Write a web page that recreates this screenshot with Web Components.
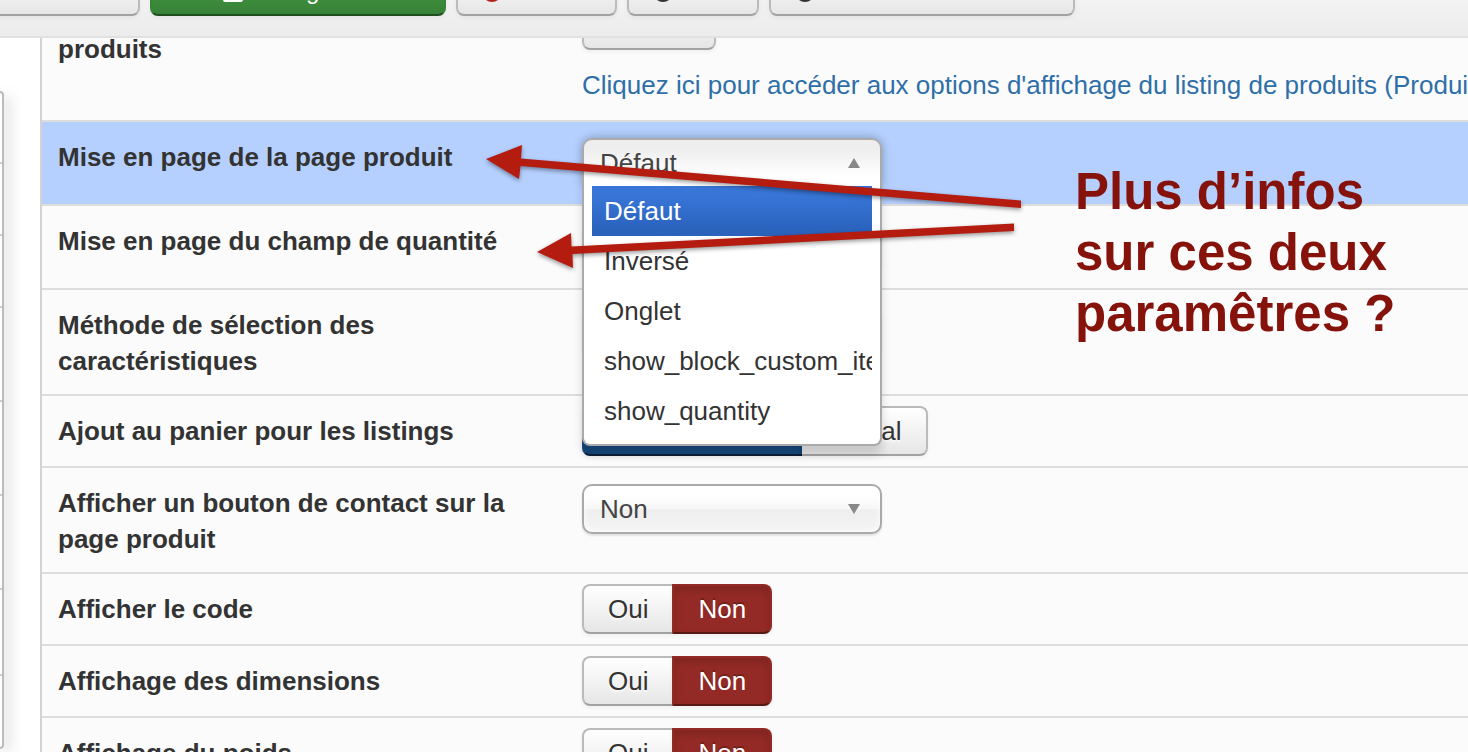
<!DOCTYPE html>
<html lang="fr">
<head>
  <meta charset="utf-8">
  <title>Configuration</title>
  <style>
    body {
      margin: 0;
      height: 100vh;
      overflow: hidden;
      background: #fff;
      color: #333;
      font: 26px/36px "Liberation Sans", Arial, sans-serif;
    }
  </style>
</head>
<body>
  <config-page></config-page>

  <script>
    class ConfigPage extends HTMLElement {
      constructor() {
        super();
        this.attachShadow({ mode: 'open' });
        this.shadowRoot.innerHTML = /*html*/ `
          <style>
            :host {
              display: flex;
              flex-direction: column;
              height: 100%;
              overflow: hidden;
            }

            .content {
              display: flex;
              flex: 1;
              min-height: 0;
              /* le contenu défile sous la barre d'outils */
              margin-top: -38px;
            }

            main {
              position: relative;
              flex: 1;
              min-width: 0;
              border-left: 2px solid #d3d3d3;
              background: #fbfbfb;
            }

            .more {
              display: flex;
              flex-direction: column;
              align-items: flex-start;
              gap: 17px;
            }

            .more a {
              color: #2f6fa8;
              text-decoration: none;
              white-space: nowrap;
            }
          </style>

          <tool-bar>
            <tool-button icon="save">Enregistrer &amp; Fermer</tool-button>
            <tool-button icon="save" class="primary">Enregistrer</tool-button>
            <tool-button icon="close">Fermer</tool-button>
            <tool-button icon="help">Aide</tool-button>
            <tool-button icon="help">Panneau de contrôle</tool-button>
          </tool-bar>

          <div class="content">
            <side-menu></side-menu>
            <main>
              <form-row class="first">
                <span slot="label">produits</span>
                <div class="more">
                  <plain-button></plain-button>
                  <a href="#listing">Cliquez ici pour accéder aux options d'affichage du listing de produits (Produits)</a>
                </div>
              </form-row>
              <form-row class="active">
                <label slot="label" for="layout">Mise en page de la page produit</label>
                <select-box id="layout" name="Mise en page de la page produit" open
                  options='["Défaut","Inversé","Onglet","show_block_custom_item","show_quantity"]'></select-box>
              </form-row>
              <form-row>
                <label slot="label" for="quantity">Mise en page du champ de quantité</label>
                <select-box id="quantity" name="Mise en page du champ de quantité" options="[]"></select-box>
              </form-row>
              <form-row>
                <label slot="label" for="method">Méthode de sélection des caractéristiques</label>
                <select-box id="method" name="Méthode de sélection des caractéristiques" options="[]"></select-box>
              </form-row>
              <form-row class="compact">
                <label slot="label" for="cart">Ajout au panier pour les listings</label>
                <toggle-group id="cart" name="Ajout au panier pour les listings" options='["","Global"]' value="" class="wide"></toggle-group>
              </form-row>
              <form-row>
                <label slot="label" for="contact">Afficher un bouton de contact sur la page produit</label>
                <select-box id="contact" name="Afficher un bouton de contact sur la page produit" options='["Non"]'></select-box>
              </form-row>
              <form-row class="compact">
                <label slot="label" for="code">Afficher le code</label>
                <toggle-group id="code" name="Afficher le code" options='["Oui","Non"]' value="Non"></toggle-group>
              </form-row>
              <form-row class="compact">
                <label slot="label" for="dimensions">Affichage des dimensions</label>
                <toggle-group id="dimensions" name="Affichage des dimensions" options='["Oui","Non"]' value="Non"></toggle-group>
              </form-row>
              <form-row class="compact">
                <label slot="label" for="weight">Affichage du poids</label>
                <toggle-group id="weight" name="Affichage du poids" options='["Oui","Non"]' value="Non"></toggle-group>
              </form-row>
              <page-note>Plus d’infos<br>sur ces deux<br>paramêtres ?</page-note>
            </main>
          </div>
        `;
      }
    }

    class ToolBar extends HTMLElement {
      constructor() {
        super();
        this.attachShadow({ mode: 'open' });
        this.shadowRoot.innerHTML = /*html*/ `
          <style>
            :host {
              position: relative;
              z-index: 1;
              display: flex;
              align-items: flex-end;
              gap: 10px;
              flex: none;
              box-sizing: border-box;
              height: 38px;
              padding-bottom: 20px;
              border-bottom: 2px solid #e1e1e1;
              background: linear-gradient(#f2f2f2, #ececec);
              overflow: hidden;
            }

            ::slotted(:first-child) {
              margin-left: -168px;
            }
          </style>
          <slot></slot>
        `;
      }
    }

    class ToolButton extends HTMLElement {
      constructor() {
        super();
        this.attachShadow({ mode: 'open' });
      }

      connectedCallback() {
        const icons = {
          save: '<path d="M0 2h15l3 3v11q0 2-2 2H2q-2 0-2-2z" fill="currentColor"/>',
          close: '<circle cx="9" cy="9" r="9" fill="#b3221c"/><path d="M5 5l8 8M13 5l-8 8" stroke="#fff" stroke-width="3"/>',
          help: '<circle cx="9" cy="9" r="9" fill="#333"/>'
        };

        this.shadowRoot.innerHTML = /*html*/ `
          <style>
            :host {
              display: block;
              flex: none;
            }

            button {
              display: flex;
              align-items: center;
              justify-content: center;
              gap: 12px;
              box-sizing: border-box;
              height: 50px;
              padding: 0 24px;
              border: 2px solid #bbb;
              border-bottom-color: #a2a2a2;
              border-radius: 8px;
              background: linear-gradient(#fff, #e6e6e6);
              box-shadow: 0 2px 4px rgba(0, 0, 0, .05);
              color: #333;
              font: 24px/36px "Liberation Sans", Arial, sans-serif;
              white-space: nowrap;
            }

            svg {
              width: 20px;
              height: 22px;
            }

            :host(.primary) button {
              width: 296px;
              border-color: #398439 #398439 #1f4d1f;
              background: linear-gradient(#46a546, #378137);
              color: #fff;
            }
          </style>
          <button type="button">
            <svg viewBox="0 0 18 18" preserveAspectRatio="xMidYMax" aria-hidden="true">${icons[this.getAttribute('icon')]}</svg>
            <slot></slot>
          </button>
        `;
      }
    }

    // Bouton dont seul le bas dépasse de la barre d'outils
    class PlainButton extends HTMLElement {
      constructor() {
        super();
        this.attachShadow({ mode: 'open' });
        this.shadowRoot.innerHTML = /*html*/ `
          <style>
            :host {
              display: block;
            }

            button {
              display: block;
              box-sizing: border-box;
              width: 134px;
              height: 50px;
              border: 2px solid #bbb;
              border-bottom-color: #a2a2a2;
              border-radius: 8px;
              background: linear-gradient(#fff, #e6e6e6);
              box-shadow: 0 2px 4px rgba(0, 0, 0, .05);
            }
          </style>
          <button type="button" aria-label="Options"></button>
        `;
      }
    }

    class SideMenu extends HTMLElement {
      constructor() {
        super();
        this.attachShadow({ mode: 'open' });
        const heights = [71, 72, 72, 94, 94, 94, 86, 71];

        this.shadowRoot.innerHTML = /*html*/ `
          <style>
            :host {
              display: block;
              flex: none;
              width: 40px;
            }

            ul {
              box-sizing: border-box;
              width: 4px;
              margin: 91px 0 0;
              padding: 0;
              list-style: none;
              border: 2px solid #bbb;
              border-left: 0;
              border-radius: 0 8px 8px 0;
              box-shadow: 4px 4px 14px rgba(0, 0, 0, .28);
            }

            li {
              box-sizing: border-box;
              border-bottom: 2px solid #ccc;
            }

            li:last-child {
              border: 0;
            }
          </style>
          <ul>${heights.map(h => `<li style="height: ${h}px"></li>`).join('')}</ul>
        `;
      }
    }

    class FormRow extends HTMLElement {
      constructor() {
        super();
        this.attachShadow({ mode: 'open' });
        this.shadowRoot.innerHTML = /*html*/ `
          <style>
            :host {
              display: grid;
              grid-template-columns: 524px minmax(0, 1fr);
              border-top: 2px solid #ddd;
            }

            :host(.active) {
              background: #b5d0ff;
            }

            :host(.first) {
              border-top: 0;
            }

            .label {
              padding: 17px 16px 15px;
              font-weight: bold;
            }

            .control {
              padding: 16px;
            }

            :host(.compact) .control {
              padding: 10px 16px;
            }

            :host(.first) .label {
              padding-top: 31px;
            }

            :host(.first) .control {
              padding: 0 0 17px 16px;
            }
          </style>
          <div class="label"><slot name="label"></slot></div>
          <div class="control"><slot></slot></div>
        `;
      }
    }

    class SelectBox extends HTMLElement {
      static formAssociated = true;

      constructor() {
        super();
        this.attachShadow({ mode: 'open', delegatesFocus: true });
      }

      connectedCallback() {
        const options = JSON.parse(this.getAttribute('options') || '[]');
        const open = this.hasAttribute('open');
        const arrow = open ? 'M6 0l6 10H0z' : 'M0 0h12L6 10z';

        this.shadowRoot.innerHTML = /*html*/ `
          <style>
            :host {
              position: relative;
              display: grid;
              align-items: center;
              width: 300px;
            }

            select {
              grid-area: 1 / 1;
              appearance: none;
              box-sizing: border-box;
              width: 100%;
              height: 50px;
              margin: 0;
              padding: 0 16px;
              border: 2px solid #aaa;
              border-radius: 10px;
              background: linear-gradient(#fff 20%, #f6f6f6 50%, #eee 52%, #f4f4f4 100%);
              box-shadow: inset 0 0 6px #fff, 0 2px 2px rgba(0, 0, 0, .1);
              color: #444;
              font: inherit;
            }

            svg {
              grid-area: 1 / 1;
              justify-self: end;
              width: 12px;
              height: 10px;
              margin-right: 22px;
              fill: #888;
              pointer-events: none;
            }

            :host([open]) select {
              border-bottom: 2px solid transparent;
              border-radius: 10px 10px 0 0;
              background: linear-gradient(#eee 20%, #fff 80%);
              box-shadow: 0 0 10px rgba(0, 0, 0, .3);
            }

            :host([open]) svg {
              z-index: 3;
            }

            /* liste déroulante par-dessus les lignes suivantes */
            ul {
              position: absolute;
              z-index: 2;
              top: 48px;
              left: 0;
              right: 0;
              margin: 0;
              padding: 0 8px 8px;
              list-style: none;
              border: 2px solid #aaa;
              border-top: 0;
              border-radius: 0 0 8px 8px;
              background: #fff;
              box-shadow: 0 8px 10px rgba(0, 0, 0, .15);
            }

            li {
              padding: 7px 12px;
              white-space: nowrap;
              overflow: hidden;
            }

            li[aria-selected="true"] {
              background: linear-gradient(#3875d7 20%, #2a62bc 90%);
              color: #fff;
            }
          </style>
          <select aria-label="${this.getAttribute('name')}">
            ${options.map(o => `<option>${o}</option>`).join('')}
          </select>
          <svg viewBox="0 0 12 10" aria-hidden="true"><path d="${arrow}"/></svg>
          ${open ? `<ul role="listbox">
            ${options.map((o, i) => `<li role="option" aria-selected="${i === 0}">${o}</li>`).join('')}
          </ul>` : ''}
        `;
      }
    }

    class ToggleGroup extends HTMLElement {
      static formAssociated = true;

      constructor() {
        super();
        this.attachShadow({ mode: 'open', delegatesFocus: true });
      }

      connectedCallback() {
        const options = JSON.parse(this.getAttribute('options') || '[]');
        const value = this.getAttribute('value');

        this.shadowRoot.innerHTML = /*html*/ `
          <style>
            :host {
              display: block;
            }

            .group {
              display: flex;
            }

            label {
              position: relative;
              box-sizing: border-box;
              height: 50px;
              padding: 5px 24px;
              border: 2px solid #bbb;
              border-bottom-color: #a2a2a2;
              background: linear-gradient(#fff, #e6e6e6);
              box-shadow: 0 2px 4px rgba(0, 0, 0, .05);
              text-align: center;
              text-shadow: 0 2px 2px rgba(255, 255, 255, .75);
            }

            label:first-child {
              border-right: 0;
              border-radius: 8px 0 0 8px;
            }

            label:last-child {
              border-radius: 0 8px 8px 0;
            }

            label:has(:checked) {
              border-color: #942a25 #942a25 #571916;
              background: #942a25;
              box-shadow: inset 0 4px 8px rgba(0, 0, 0, .15), 0 2px 4px rgba(0, 0, 0, .05);
              color: #fff;
              text-shadow: 0 -2px 0 rgba(0, 0, 0, .25);
            }

            :host(.wide) label:first-child {
              width: 220px;
              border-color: #164a80 #164a80 #0b1f38;
              background: #164a80;
            }

            :host(.wide) label:last-child {
              width: 126px;
              border-left: 0;
            }

            input {
              position: absolute;
              inset: 0;
              margin: 0;
              opacity: 0;
            }
          </style>
          <div class="group" role="radiogroup" aria-label="${this.getAttribute('name')}">
            ${options.map(o =>
              `<label><input type="radio" name="choice" value="${o}"${o === value ? ' checked' : ''}>${o}</label>`
            ).join('')}
          </div>
        `;
      }
    }

    // Annotation libre : deux flèches et un texte posés sur le formulaire
    class PageNote extends HTMLElement {
      constructor() {
        super();
        this.attachShadow({ mode: 'open' });
        this.shadowRoot.innerHTML = /*html*/ `
          <style>
            :host {
              position: absolute;
              z-index: 4;
              top: 0;
              left: 0;
              pointer-events: none;
            }

            svg {
              position: absolute;
              top: 140px;
              left: 438px;
              width: 560px;
              height: 140px;
              fill: #b51c10;
              filter: drop-shadow(0 2px 2px rgba(0, 0, 0, .4));
            }

            p {
              position: absolute;
              top: 161px;
              left: 1033px;
              margin: 0;
              color: #85120b;
              font-size: 51px;
              font-weight: bold;
              line-height: 61px;
              white-space: nowrap;
            }
          </style>
          <svg viewBox="480 140 560 140" aria-hidden="true">
            <path d="M486 159L522 145L521 158.500L1021 200.500V208L520.500 166L519 179z"/>
            <path d="M537 252L571 233L571.500 246.500L1014 223.500V231L572.500 254L573 268z"/>
          </svg>
          <p><slot></slot></p>
        `;
      }
    }

    customElements.define('tool-bar', ToolBar);
    customElements.define('tool-button', ToolButton);
    customElements.define('plain-button', PlainButton);
    customElements.define('side-menu', SideMenu);
    customElements.define('form-row', FormRow);
    customElements.define('select-box', SelectBox);
    customElements.define('toggle-group', ToggleGroup);
    customElements.define('page-note', PageNote);
    customElements.define('config-page', ConfigPage);
  </script>
</body>
</html>
